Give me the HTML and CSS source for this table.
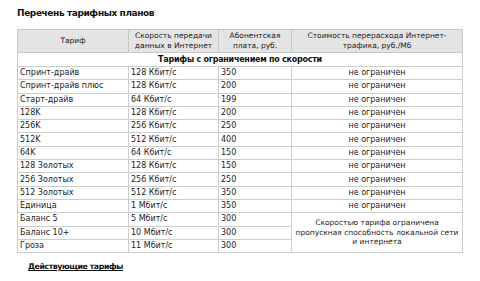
FILE: index.html
```html
<!DOCTYPE html>
<html lang="ru">
<head>
<meta charset="utf-8">
<link rel="stylesheet" href="styles.css">
</head>
<body>
<div class="page">
  <h1 class="title">Перечень тарифных планов</h1>
  <table class="tariffs">
    <colgroup>
      <col class="c1"><col class="c2"><col class="c3"><col class="c4">
    </colgroup>
    <thead>
      <tr>
        <th>Тариф</th>
        <th>Скорость передачи<br>данных в Интернет</th>
        <th>Абонентская<br>плата, руб.</th>
        <th>Стоимость перерасхода Интернет-<br>трафика, руб./Мб</th>
      </tr>
    </thead>
    <tbody>
      <tr><td colspan="4" class="section">Тарифы с ограничением по скорости</td></tr>
      <tr><td>Спринт-драйв</td><td>128 Кбит/с</td><td>350</td><td class="mid">не ограничен</td></tr>
      <tr><td>Спринт-драйв плюс</td><td>128 Кбит/с</td><td>200</td><td class="mid">не ограничен</td></tr>
      <tr><td>Старт-драйв</td><td>64 Кбит/с</td><td>199</td><td class="mid">не ограничен</td></tr>
      <tr><td>128K</td><td>128 Кбит/с</td><td>200</td><td class="mid">не ограничен</td></tr>
      <tr><td>256K</td><td>256 Кбит/с</td><td>250</td><td class="mid">не ограничен</td></tr>
      <tr><td>512K</td><td>512 Кбит/с</td><td>400</td><td class="mid">не ограничен</td></tr>
      <tr><td>64K</td><td>64 Кбит/с</td><td>150</td><td class="mid">не ограничен</td></tr>
      <tr><td>128 Золотых</td><td>128 Кбит/с</td><td>150</td><td class="mid">не ограничен</td></tr>
      <tr><td>256 Золотых</td><td>256 Кбит/с</td><td>250</td><td class="mid">не ограничен</td></tr>
      <tr><td>512 Золотых</td><td>512 Кбит/с</td><td>350</td><td class="mid">не ограничен</td></tr>
      <tr><td>Единица</td><td>1 Мбит/с</td><td>350</td><td class="mid">не ограничен</td></tr>
      <tr><td>Баланс 5</td><td>5 Мбит/с</td><td>300</td><td class="mid multi" rowspan="3">Скоростью тарифа ограничена<br>пропускная способность локальной сети<br>и интернета</td></tr>
      <tr><td>Баланс 10+</td><td>10 Мбит/с</td><td>300</td></tr>
      <tr><td>Гроза</td><td>11 Мбит/с</td><td>300</td></tr>
    </tbody>
  </table>
  <a class="link" href="#">Действующие тарифы</a>
</div>
</body>
</html>
```

FILE: styles.css
```css
html, body {
  margin: 0;
  padding: 0;
  background: #ffffff;
}
body {
  font-family: "DejaVu Sans", Verdana, sans-serif;
  color: #1a1a1a;
}
.page {
  padding: 7px 0 0 17px;
  display: flex;
  flex-direction: column;
  align-items: flex-start;
}
.title {
  margin: 0 0 10px 0;
  font-size: 9px;
  letter-spacing: -0.4px;
  line-height: 12px;
  font-weight: bold;
  color: #111;
}
.tariffs {
  border-collapse: collapse;
  width: 445px;
  table-layout: fixed;
  font-size: 8px;
  border: 1px solid #c4c4c4;
}
.c1 { width: 111px; }
.c2 { width: 90px; }
.c3 { width: 73px; }
.c4 { width: 171px; }
.tariffs th {
  background: #e4e4e4;
  font-weight: normal;
  font-size: 7.5px;
  text-align: center;
  height: 22px;
  padding: 0 2px;
  line-height: 10px;
  border: 1px solid #c8c8c8;
  color: #222;
}
.tariffs td {
  border: 1px solid #cdcdcd;
  padding: 0 2px;
  height: 12.3px;
  line-height: 12px;
  text-align: left;
  white-space: nowrap;
  color: #222;
}
.tariffs td.section {
  text-align: center;
  font-weight: bold;
  letter-spacing: -0.25px;
  height: 13px;
  color: #111;
}
.tariffs td.mid {
  text-align: center;
}
.tariffs td.multi {
  font-size: 7.5px;
  line-height: 9.5px;
  padding: 0 1px;
}
.link {
  margin: 9px 0 0 11px;
  font-size: 7.8px;
  letter-spacing: -0.4px;
  font-weight: bold;
  color: #111;
  text-decoration: underline;
}
```
